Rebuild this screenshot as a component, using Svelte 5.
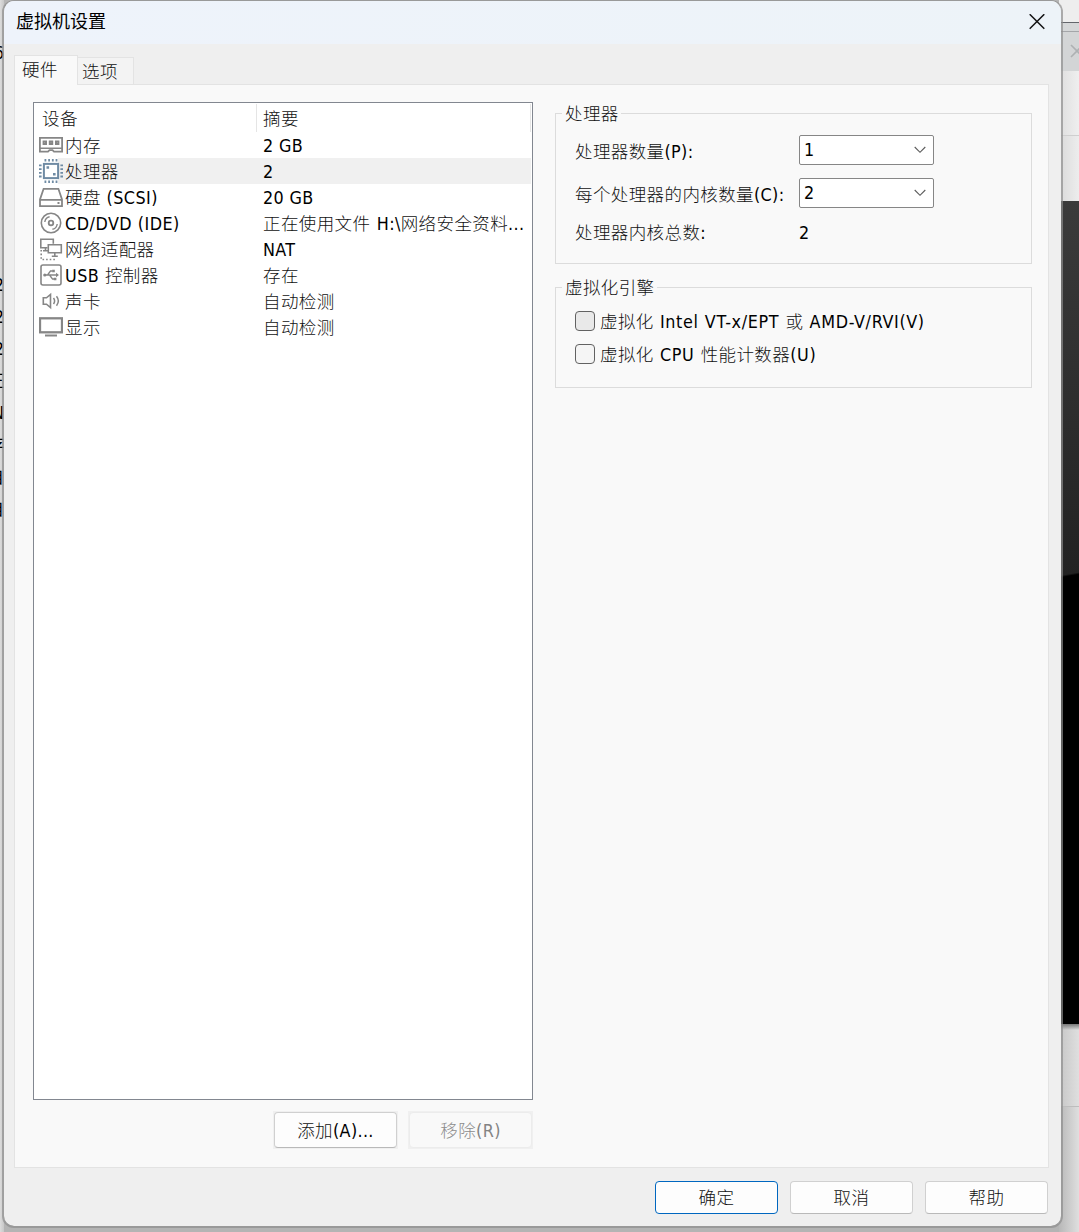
<script>
  const devices = [
    { icon: 'memory', name: '内存', summary: '2 GB' },
    { icon: 'cpu', name: '处理器', summary: '2', selected: true },
    { icon: 'disk', name: '硬盘 (SCSI)', summary: '20 GB' },
    { icon: 'cd', name: 'CD/DVD (IDE)', summary: '正在使用文件 H:\\网络安全资料...' },
    { icon: 'network', name: '网络适配器', summary: 'NAT' },
    { icon: 'usb', name: 'USB 控制器', summary: '存在' },
    { icon: 'sound', name: '声卡', summary: '自动检测' },
    { icon: 'display', name: '显示', summary: '自动检测' }
  ];

  // Splits a label into Latin and CJK runs so each can be spaced on its own.
  const runs = (text) =>
    (text.match(/[\x00-\x7f]+|[^\x00-\x7f]+/g) ?? []).map((t) => ({ t, latin: t.charCodeAt(0) < 128 }));
  const latinOnly = (text) => /^[\x00-\x7f]+$/.test(text);
</script>

{#snippet label(text)}<span class="label" class:plain={latinOnly(text)}>{#each runs(text) as r}<span class={r.latin ? 'latin' : 'cjk'}>{r.t}</span>{/each}</span>{/snippet}

{#snippet icon(name)}
  <svg class="icon" width="24" height="26" viewBox="0 0 24 26" fill="none" stroke="#868686" stroke-width="1.6">
    {#if name === 'memory'}
      <path stroke-width="1.800" d="M.9 5.900h22.200v13.800H15l-1.500-1.500h-3L9 19.700H.9z" />
      <path stroke-width="1.500" d="M1 16.200h22" />
      <path stroke-width="2" d="M4.600 9.600h2.400v2.400H4.600zM10.800 9.600h2.400v2.400h-2.400zM17 9.600h2.400v2.400H17z" />
    {:else if name === 'cpu'}
      <g stroke="#6f8ba4">
        <rect x="4.900" y="5.900" width="14.200" height="14.200" stroke-width="2" />
        <path stroke-width="2.600" stroke-dasharray="1.800 1.900" d="M5.500 2.300h13M5.500 23.700h13M1.300 6.500v13M22.700 6.500v13" />
        <path stroke-width="2.600" d="M7.500 9.500h2.600M14 16.300h2.600" />
      </g>
    {:else if name === 'disk'}
      <path stroke-width="1.800" d="M4.600 4.800h14.800L23 15.500v6.700H1v-6.700zM1 15.800h22" />
      <path stroke-width="1.800" d="M18.500 19h2" />
    {:else if name === 'cd'}
      <circle cx="12" cy="13" r="9.700" />
      <circle cx="12" cy="13" r="2.300" stroke-width="1.800" />
      <path d="M5.800 12c.3-2.600 2.200-4.800 4.800-5.300M18.200 14c-.3 2.600-2.200 4.800-4.800 5.300" stroke-width="1.400" />
    {:else if name === 'network'}
      <path d="M8.500 11.800H1.800V3.300h12.500v4.500" />
      <path d="M9.300 8.800h13v8h-13zM15.800 16.800v3.200M12.800 20.300h6M6.500 11.800v2.800M4 14.800h4.500" />
      <path stroke-width="1.600" stroke-dasharray="1.600 2" d="M2.200 14v9.500h14" />
    {:else if name === 'usb'}
      <rect x="2" y="3" width="20" height="20" rx="2" />
      <path stroke-width="1.300" d="M5 13h13M8.500 13l3-4h2M10.500 13l3 4h2" />
      <path fill="#868686" stroke="none" d="M17 10.800l3 2.200-3 2.200zM13.200 7.700h2.600v2.600h-2.600zM14.800 15.700h2.600v2.600h-2.600z" />
      <circle cx="5.800" cy="13" r="1.600" fill="#868686" stroke="none" />
    {:else if name === 'sound'}
      <path d="M4.300 9.800h3.200L11.500 6.500v13L7.500 16.200H4.300z" />
      <path stroke-width="1.500" d="M14.500 10c1.200 1.600 1.200 4.400 0 6M17.500 8.300c2.200 2.800 2.200 6.600 0 9.400" />
    {:else if name === 'display'}
      <rect x="1" y="4.300" width="22" height="14" stroke-width="2.300" />
      <path stroke-width="2" d="M6 21.500h12" />
    {/if}
  </svg>
{/snippet}

{#snippet combo(value)}
  <button class="combo">
    {@render label(value)}
    <svg width="12" height="8" viewBox="0 0 12 8" fill="none" stroke="#5c5c5c" stroke-width="1.100"><path d="M.7 1l5.300 5.300L11.300 1" /></svg>
  </button>
{/snippet}

<div class="desktop">
  <div class="left-strip">
    <i class="peek" style:top="42px">6</i>
    {#each ['2', '2', '2', '正', 'N', '存', '自', '自'] as ch, i}
      <i class="peek" style:top="{274 + i * 32}px">{ch}</i>
    {/each}
  </div>
  <div class="right-strip">
    <div class="r-top"></div>
    <div class="r-bar"></div>
    <div class="r-tab">
      <svg width="15" height="15" viewBox="0 0 15 15" stroke="#aeb1b3" stroke-width="1.600"><path d="M1 1l12 12M13 1L1 13" /></svg>
    </div>
    <div class="r-pane"></div>
    <div class="r-toolbar"></div>
    <div class="r-screen"></div>
    <div class="r-status"></div>
    <div class="r-foot"></div>
  </div>

  <div class="dialog">
    <header>
      <h1>虚拟机设置</h1>
      <svg width="16" height="16" viewBox="0 0 16 16" stroke="#151515" stroke-width="1.500"><path d="M.7.2l14.600 14.600M15.300.2L.7 14.800" /></svg>
    </header>

    <nav>
      <div class="tab active">{@render label('硬件')}</div>
      <div class="tab">{@render label('选项')}</div>
    </nav>

    <main>
      <section class="hardware">
        <div class="list">
          <div class="head">
            <div class="c1">{@render label('设备')}</div>
            <div class="c2">{@render label('摘要')}</div>
          </div>
          {#each devices as d}
            <div class="row" class:selected={d.selected}>
              {@render icon(d.icon)}
              <div class="name">{@render label(d.name)}</div>
              <div class="summary">{@render label(d.summary)}</div>
            </div>
          {/each}
        </div>
        <div class="actions">
          <div class="well"><button>{@render label('添加(A)...')}</button></div>
          <div class="well off"><button disabled>{@render label('移除(R)')}</button></div>
        </div>
      </section>

      <section class="details">
        <div class="group processors">
          <div class="legend">{@render label('处理器')}</div>
          <div class="field">{@render label('处理器数量(P):')}{@render combo('1')}</div>
          <div class="field">{@render label('每个处理器的内核数量(C):')}{@render combo('2')}</div>
          <div class="field total">{@render label('处理器内核总数:')}{@render label('2')}</div>
        </div>
        <div class="group engine">
          <div class="legend">{@render label('虚拟化引擎')}</div>
          <div class="check"><span class="box hover"></span>{@render label('虚拟化 Intel VT-x/EPT 或 AMD-V/RVI(V)')}</div>
          <div class="check"><span class="box"></span>{@render label('虚拟化 CPU 性能计数器(U)')}</div>
        </div>
      </section>
    </main>

    <footer>
      <button class="primary">{@render label('确定')}</button>
      <button>{@render label('取消')}</button>
      <button>{@render label('帮助')}</button>
    </footer>
  </div>
</div>

<style>
  :global(body) { margin: 0; overflow: hidden; }
  .desktop, .desktop * { box-sizing: border-box; }
  .desktop {
    position: relative; width: 1079px; height: 1232px; overflow: hidden;
    background: linear-gradient(#b5b5b5 0 5px, #d5d5d5 40px, #d0d0d0 1180px, #b4b4b4 1226px);
    color: #000;
    font-family: "DejaVu Sans Condensed", "DejaVu Sans", "Noto Sans CJK SC", sans-serif;
    font-stretch: condensed; font-size: 17.500px; line-height: 26px;
  }
  .left-strip { position: absolute; left: 0; top: 0; width: 4px; height: 1232px; overflow: hidden; background: linear-gradient(90deg, #dcdcdc, #c8c8c8); }
  .peek { position: absolute; right: 0; font-style: normal; line-height: 22px; }
  .right-strip { position: absolute; left: 1059px; top: 0; width: 20px; height: 1232px; display: flex; flex-direction: column; }
  .r-top { height: 22px; background: #eeeeee; }
  .r-bar { height: 10px; background: #d5d7d8; border-top: 1px solid #63666b; border-bottom: 1px solid #a4a6a9; }
  .r-tab { height: 39px; background: #d3d5d6; padding: 12px 0 0 11px; overflow: hidden; }
  .r-tab svg { display: block; }
  .r-pane { height: 65px; background: linear-gradient(90deg, #dedede, #efefef); border-bottom: 1px solid #cfcfcf; }
  .r-toolbar { height: 65px; background: linear-gradient(90deg, #dadada, #ededed); }
  .r-screen { height: 823px; background: linear-gradient(170deg, transparent 369px, #000 371px), linear-gradient(#3b3b3b, #222 375px); }
  .r-status { height: 83px; background: linear-gradient(#777, transparent 6px), linear-gradient(90deg, #c6c6c6, #dfdfdf); border-bottom: 1px solid #bdbdbd; }
  .r-foot { flex: 1; background: linear-gradient(90deg, #b8b8b8, #dfdfdf); }

  .dialog {
    position: absolute; left: 2px; top: 0; width: 1061px; height: 1228px;
    border: 2px solid rgba(142, 142, 142, .7); border-top-width: 1px; border-bottom-color: #999;
    border-radius: 12px; overflow: hidden; background: #efefef; background-clip: padding-box;
    display: flex; flex-direction: column;
  }
  header {
    height: 43px; flex: none; display: flex; justify-content: space-between; align-items: flex-start;
    padding: 13px 16.500px 0 12px; background: linear-gradient(90deg, #eef3fb, #edf3f8);
  }
  h1 { margin: -7px 0 0; font: 400 18px/26px "Noto Sans CJK SC", sans-serif; }
  nav { display: flex; align-items: flex-end; height: 40px; flex: none; padding-left: 10px; }
  .tab { height: 27px; width: 56px; padding: 0 0 0 4px; border: 1px solid #e3e3e3; border-left: 0; border-bottom: 0; background: #f3f3f3; }
  .tab.active { height: 30px; width: 64px; margin-bottom: -1px; padding-left: 7px; border-left: 1px solid #e3e3e3; background: #f9f9f9; z-index: 1; }
  main {
    width: 1035px; height: 1084px; flex: none; margin-left: 10px; padding: 17px 16px 0 18px;
    display: flex; justify-content: space-between; border: 1px solid #e3e3e3; background: #f9f9f9;
  }
  .list { width: 500px; height: 998px; border: 1px solid #828790; background: #fff; }
  .head { display: flex; height: 29px; padding: 1px 1px 0 0; line-height: 28px; }
  .c1 { width: 223px; padding-left: 8px; border-right: 1px solid #e5e5e5; }
  .c2 { flex: 1; padding-left: 6px; border-right: 1px solid #e5e5e5; }
  .row { display: flex; height: 26px; padding-left: 5px; margin-right: 1px; }
  .row.selected { background: linear-gradient(90deg, #fff 24px, #f0f0f0 24px); }
  .icon { flex: none; }
  .name { width: 200px; padding-left: 2px; }
  .summary { flex: 1; }
  .label { white-space: pre; }
  .row .plain, .total .plain { display: inline-block; padding-top: 1px; }
  .cjk { font-family: "Noto Sans CJK SC", sans-serif; font-weight: 300; letter-spacing: .4px; color: #111; }
  .latin { font-size: 17.800px; letter-spacing: .35px; }
  .name .latin { letter-spacing: .5px; }
  .summary .cjk + .latin { word-spacing: 1px; }
  .check .latin { letter-spacing: .65px; word-spacing: .5px; }
  .actions { display: flex; justify-content: flex-end; gap: 10px; margin-top: 11px; }
  .well { width: 125px; height: 38px; padding: 1px; background: #f0f0f0; }
  button {
    display: block; width: 123px; height: 36px; margin: 0; padding: 0; text-align: center; white-space: nowrap;
    font: inherit; font-stretch: condensed; color: #000; background: #fdfdfd; border: 1px solid #d0d0d0; border-bottom-color: #b9b9b9; border-radius: 4px;
  }
  .off button { background: #f9f9f9; border-color: #ececec; }
  .off .latin { color: #838383; }
  .off .cjk { color: #8c8c8c; }
  .details { width: 477px; padding-top: 11px; }
  .group { border: 1px solid #dcdcdc; padding-left: 19px; }
  .processors { height: 151px; margin-bottom: 23px; }
  .engine { height: 101px; }
  .legend { width: max-content; height: 26px; margin: -14px 0 0 -13px; padding: 0 2px 0 3px; background: #f9f9f9; }
  .field { display: grid; grid-template-columns: 224px 135px; align-items: center; height: 30px; margin-bottom: 13px; }
  .field > .label:first-child { padding-top: 2px; letter-spacing: .5px; }
  .processors .legend { margin-bottom: 9px; }
  .engine .legend { margin-bottom: 8px; }
  .total { margin-top: -4px; }
  .total > .label:first-child { padding-top: 0; }
  .combo {
    display: flex; justify-content: space-between; align-items: center; width: 135px; height: 30px;
    padding: 0 7px 0 4px; background: #fff; border-color: #868686; border-radius: 2px;
  }
  .check { display: flex; align-items: center; gap: 5px; height: 26px; margin-bottom: 7px; }
  .box { width: 20px; height: 20px; border: 1px solid #626262; border-radius: 4px; background: #f5f5f5; }
  .box.hover { background: #e9e9e9; }
  footer { display: flex; justify-content: flex-end; gap: 12px; padding: 13px 13px 0 0; }
  footer button { height: 33px; }
  footer .primary { border-color: #0067c0; }
</style>
